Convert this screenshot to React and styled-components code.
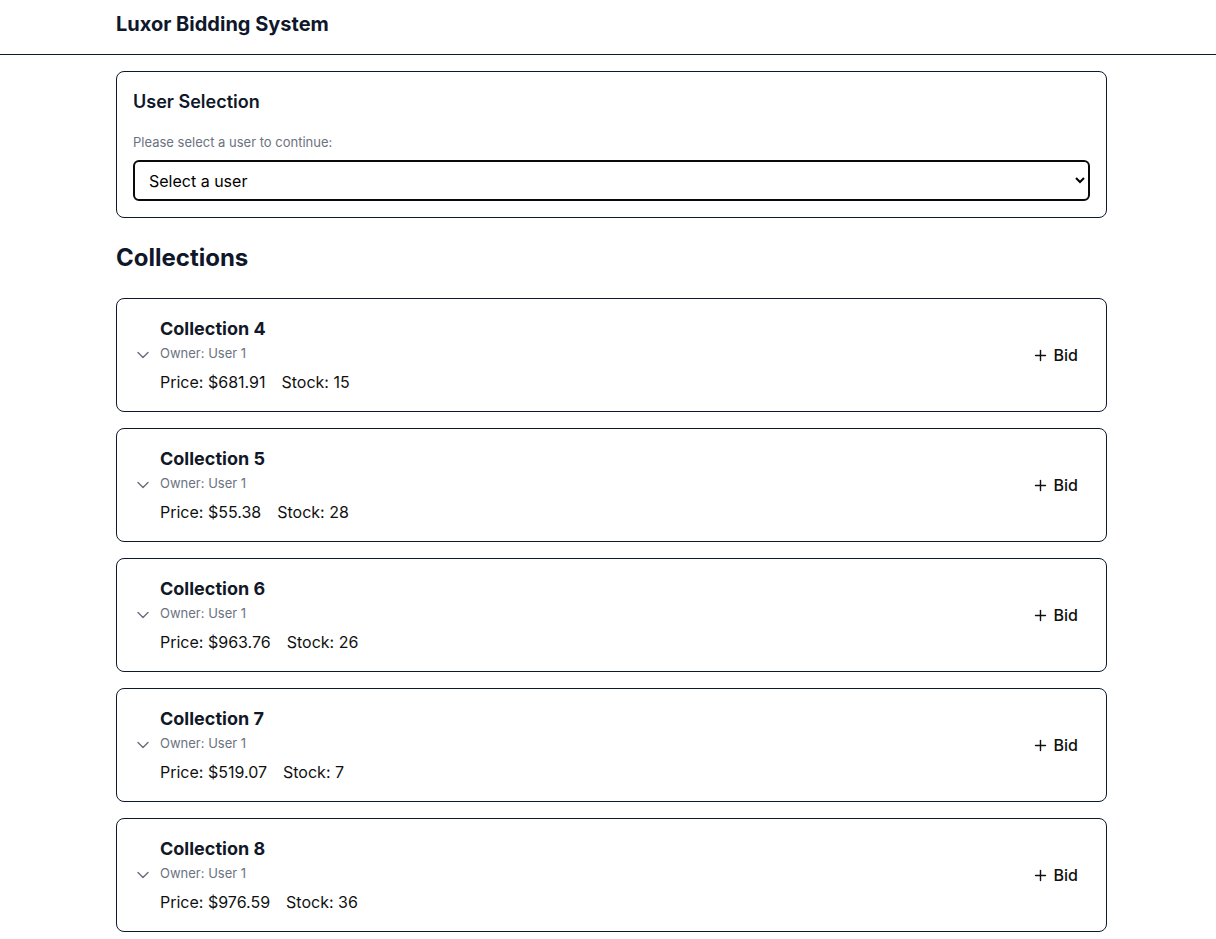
import styled, { createGlobalStyle } from "styled-components";
import { ChevronDown, Plus } from "lucide-react";

const GlobalStyle = createGlobalStyle`
    * { box-sizing: border-box; }
    body {
        margin: 0;
        font-family: Inter, "Noto Sans", sans-serif;
        color: #0f172a;
        background: #fff;
    }
`;

const Header = styled.header`
    border-bottom: 1px solid #0f172a;
    padding: 10px 0 16px;
`;

const Container = styled.div`
    max-width: 1024px;
    margin: 0 auto;
    padding: 0 13px 0 20px;
`;

const Title = styled.h1`
    margin: 0;
    font-size: 20px;
    line-height: 28px;
    font-weight: 700;
    color: #0f172a;
`;

const Main = styled(Container)`
    padding-top: 16px;
    padding-bottom: 24px;
`;

const Card = styled.section`
    border: 1px solid #0f172a;
    border-radius: 8px;
    padding: 17px 16px 16px;
`;

const CardTitle = styled.h2`
    margin: 0;
    font-size: 18px;
    line-height: 26px;
    font-weight: 600;
`;

const Label = styled.label`
    display: block;
    margin-top: 17px;
    font-size: 13px;
    line-height: 20px;
    color: #6b7280;
`;

const Select = styled.select`
    display: block;
    width: 100%;
    height: 41px;
    margin-top: 8px;
    padding: 0 12px 0 10px;
    border: 2px solid #0a0a0a;
    border-radius: 6px;
    background: #fff;
    font-family: Inter, sans-serif;
    font-size: 16px;
    color: #000;
`;

const SectionTitle = styled.h2`
    margin: 24px 0 24px;
    font-size: 24px;
    line-height: 32px;
    font-weight: 700;
`;

const List = styled.div`
    display: flex;
    flex-direction: column;
    gap: 16px;
`;

const Row = styled.div`
    display: flex;
    align-items: center;
    border: 1px solid #0f172a;
    border-radius: 8px;
    padding: 17px 16px 17px 15px;
`;

const Toggle = styled.button`
    display: flex;
    align-items: center;
    justify-content: center;
    width: 22px;
    height: 22px;
    margin-right: 6px;
    padding: 0;
    border: none;
    background: none;
    color: #6b7280;
`;

const Info = styled.div`
    flex: 1;
`;

const Name = styled.h3`
    margin: 0;
    font-size: 18px;
    line-height: 26px;
    font-weight: 700;
    color: #111827;
`;

const Owner = styled.div`
    margin-top: 1px;
    font-size: 13px;
    line-height: 20px;
    color: #6b7280;
`;

const Meta = styled.div`
    display: flex;
    gap: 16px;
    margin-top: 7px;
    font-size: 16px;
    line-height: 24px;
    color: #111;
`;

const BidButton = styled.button`
    display: flex;
    align-items: center;
    gap: 5px;
    padding: 6px 12px;
    border: none;
    background: none;
    font-family: Inter, sans-serif;
    font-size: 16px;
    font-weight: 500;
    color: #111;
`;

const collections = [
    { id: 4, price: "681.91", stock: 15 },
    { id: 5, price: "55.38", stock: 28 },
    { id: 6, price: "963.76", stock: 26 },
    { id: 7, price: "519.07", stock: 7 },
    { id: 8, price: "976.59", stock: 36 },
];

export default function App() {
    return (
        <>
            <GlobalStyle />
            <Header>
                <Container>
                    <Title>Luxor Bidding System</Title>
                </Container>
            </Header>
            <Main>
                <Card>
                    <CardTitle>User Selection</CardTitle>
                    <Label htmlFor="user">Please select a user to continue:</Label>
                    <Select id="user" defaultValue="">
                        <option value="">Select a user</option>
                    </Select>
                </Card>
                <SectionTitle>Collections</SectionTitle>
                <List>
                    {collections.map(c => (
                        <Row key={c.id}>
                            <Toggle><ChevronDown size={20} strokeWidth={1.75} /></Toggle>
                            <Info>
                                <Name>Collection {c.id}</Name>
                                <Owner>Owner: User 1</Owner>
                                <Meta>
                                    <span>Price: ${c.price}</span>
                                    <span>Stock: {c.stock}</span>
                                </Meta>
                            </Info>
                            <BidButton><Plus size={17} strokeWidth={2} />Bid</BidButton>
                        </Row>
                    ))}
                </List>
            </Main>
        </>
    );
}
